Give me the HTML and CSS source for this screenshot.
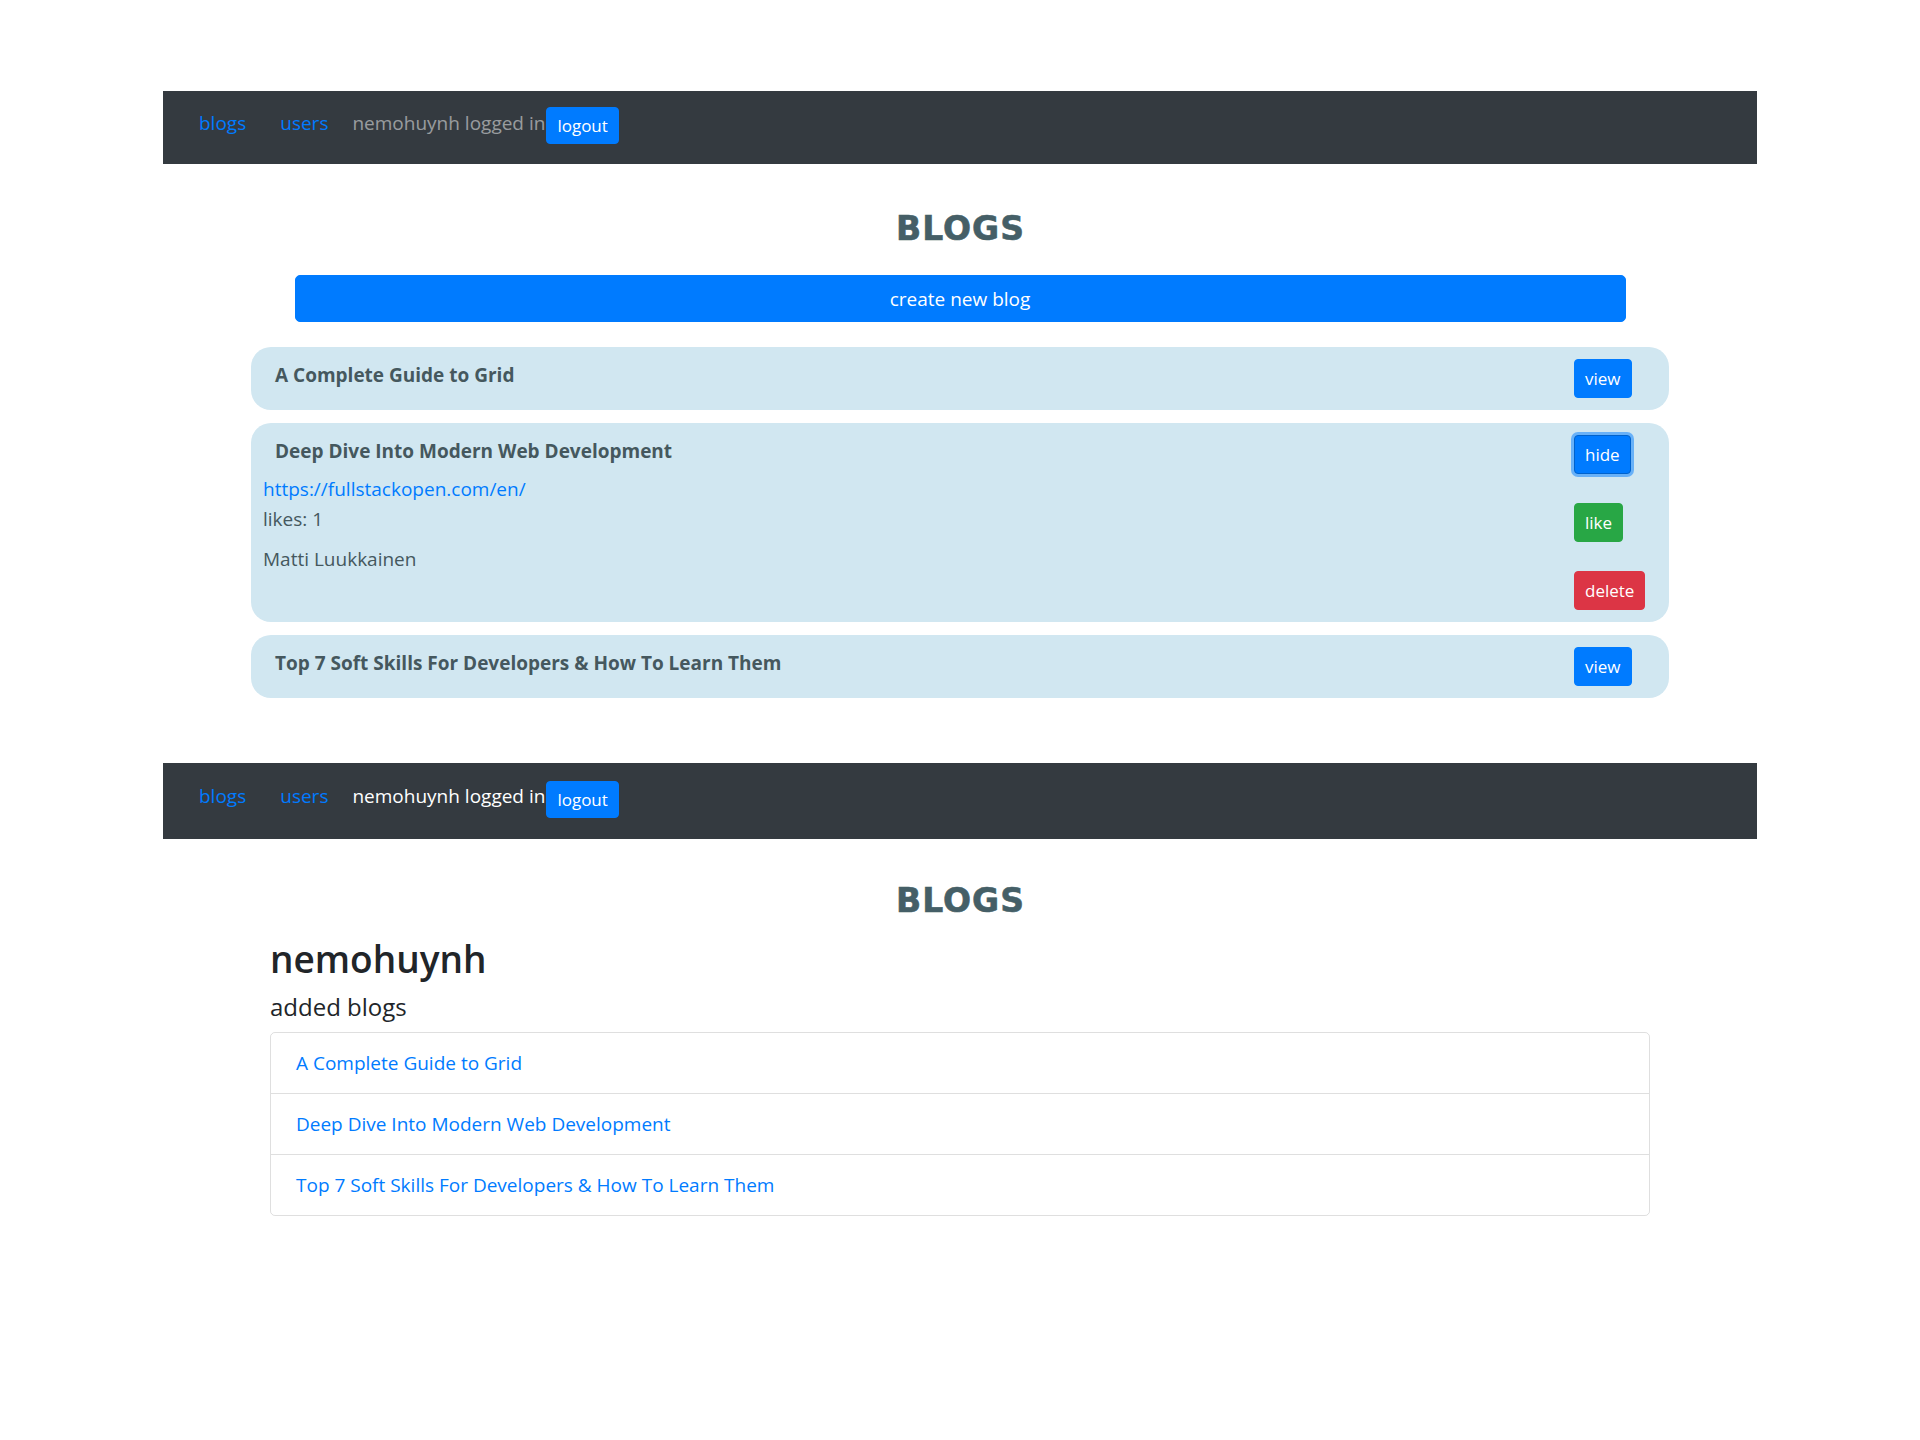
FILE: index.html
```html
<!DOCTYPE html>
<html lang="en">
<head>
<meta charset="utf-8">
<title>Blogs</title>
<link rel="stylesheet" href="styles.css">
</head>
<body>
<div class="page">
  <section class="screen screen--blogs">
    <nav class="navbar">
      <a class="nav-link nav-link--blogs" href="#">blogs</a>
      <a class="nav-link nav-link--users" href="#">users</a>
      <span class="nav-user">nemohuynh logged in</span>
      <button class="btn btn-sm btn-primary btn-logout" type="button">logout</button>
    </nav>
    <h1 class="app-title">BLOGS</h1>
    <div class="blog-area">
      <button class="btn btn-primary btn-create" type="button">create new blog</button>
      <div class="blog-card">
        <div class="blog-main">
          <div class="blog-title">A Complete Guide to Grid</div>
        </div>
        <div class="blog-actions">
          <button class="btn btn-sm btn-primary" type="button">view</button>
        </div>
      </div>
      <div class="blog-card blog-card--open">
        <div class="blog-main">
          <div class="blog-title">Deep Dive Into Modern Web Development</div>
          <a class="blog-url" href="#">https://fullstackopen.com/en/</a>
          <div class="blog-likes">likes: 1</div>
          <div class="blog-author">Matti Luukkainen</div>
        </div>
        <div class="blog-actions">
          <button class="btn btn-sm btn-primary btn-focus" type="button">hide</button>
          <button class="btn btn-sm btn-success" type="button">like</button>
          <button class="btn btn-sm btn-danger" type="button">delete</button>
        </div>
      </div>
      <div class="blog-card">
        <div class="blog-main">
          <div class="blog-title">Top 7 Soft Skills For Developers &amp; How To Learn Them</div>
        </div>
        <div class="blog-actions">
          <button class="btn btn-sm btn-primary" type="button">view</button>
        </div>
      </div>
    </div>
  </section>

  <section class="screen screen--user">
    <nav class="navbar navbar--tall">
      <a class="nav-link nav-link--blogs" href="#">blogs</a>
      <a class="nav-link nav-link--users" href="#">users</a>
      <span class="nav-user nav-user--active">nemohuynh logged in</span>
      <button class="btn btn-sm btn-primary btn-logout" type="button">logout</button>
    </nav>
    <h1 class="app-title app-title--compact">BLOGS</h1>
    <div class="profile">
      <h2 class="profile-name">nemohuynh</h2>
      <h3 class="profile-sub">added blogs</h3>
      <ul class="list-group">
        <li class="list-item"><a href="#">A Complete Guide to Grid</a></li>
        <li class="list-item"><a href="#">Deep Dive Into Modern Web Development</a></li>
        <li class="list-item"><a href="#">Top 7 Soft Skills For Developers &amp; How To Learn Them</a></li>
      </ul>
    </div>
  </section>
</div>
</body>
</html>
```
FILE: styles.css
```css
html, body {
  margin: 0;
  padding: 0;
  background: #ffffff;
}

body {
  font-family: "Open Sans", "Noto Sans", sans-serif;
  font-size: 19px;
  line-height: 30px;
  color: #212529;
}

.page {
  padding-bottom: 40px;
}

.screen {
  width: 1594px;
  margin: 0 auto;
}

.screen--blogs {
  padding-top: 91px;
}

.screen--user {
  margin-top: 65px;
}

/* navbar */
.navbar {
  display: flex;
  align-items: center;
  box-sizing: border-box;
  height: 73px;
  padding: 0 0 4px 36px;
  background: #343a40;
}

.navbar--tall {
  height: 76px;
}

.nav-link {
  color: #007bff;
  text-decoration: none;
  margin-bottom: 6px;
}

.nav-link--blogs {
  margin-right: 34px;
}

.nav-link--users {
  margin-right: 24px;
}

.nav-user {
  color: rgba(255, 255, 255, 0.5);
  margin-bottom: 6px;
  margin-right: 1px;
}

.nav-user--active {
  color: #ffffff;
}

/* buttons */
.btn {
  display: inline-block;
  font-family: inherit;
  font-weight: 400;
  text-align: center;
  border: 1px solid transparent;
  cursor: pointer;
  color: #ffffff;
}

.btn-sm {
  font-size: 17px;
  line-height: 27px;
  padding: 5px 10px;
  border-radius: 4px;
}

.btn-primary {
  background: #007bff;
  border-color: #007bff;
}

.btn-success {
  background: #28a745;
  border-color: #28a745;
}

.btn-danger {
  background: #dc3545;
  border-color: #dc3545;
}

.btn-focus {
  border-color: #0062cc;
  box-shadow: 0 0 0 3px rgba(0, 123, 255, 0.5);
}

.btn-logout {
  line-height: 25px;
  padding: 5px 10px;
}

/* heading */
.app-title {
  margin: 45px 0 0;
  text-align: center;
  font-family: "DejaVu Sans", "Open Sans", sans-serif;
  font-size: 33px;
  line-height: 40px;
  font-weight: 700;
  letter-spacing: 1px;
  padding-left: 1px;
  color: #455f67;
  -webkit-text-stroke: 0.6px #455f67;
}

.app-title--compact {
  margin-top: 42px;
}

/* blog list */
.blog-area {
  width: 1418px;
  margin: 26px auto 0;
  display: flex;
  flex-direction: column;
  gap: 13px;
}

.btn-create {
  align-self: center;
  width: 1331px;
  font-size: 19px;
  line-height: 30px;
  padding: 7.5px 12px;
  border-radius: 5px;
  margin-bottom: 12px;
}

.blog-card {
  display: flex;
  background: #d1e7f1;
  border-radius: 20px;
  padding: 12px 24px 12px 12px;
  color: #45585e;
}

.blog-main {
  flex: 1;
  min-width: 0;
}

.blog-title {
  font-weight: 700;
  padding-left: 12px;
  margin-top: 1px;
}

.blog-card--open .blog-title {
  margin-bottom: 8px;
}

.blog-url {
  display: block;
  color: #007bff;
  text-decoration: none;
}

.blog-author {
  margin-top: 10px;
}

.blog-actions {
  width: 71px;
  display: flex;
  flex-direction: column;
  align-items: flex-start;
  gap: 29px;
}

/* user page */
.profile {
  width: 1380px;
  margin: 16px auto 0;
}

.profile-name {
  margin: 0;
  font-size: 37px;
  line-height: 44px;
  font-weight: 600;
  color: #212529;
}

.profile-sub {
  margin: 11px 0 11px;
  font-size: 24px;
  line-height: 29px;
  font-weight: 400;
  color: #212529;
}

.list-group {
  list-style: none;
  margin: 0;
  padding: 0;
  border: 1px solid rgba(0, 0, 0, 0.125);
  border-radius: 5px;
}

.list-item {
  padding: 15px 25px;
}

.list-item + .list-item {
  border-top: 1px solid rgba(0, 0, 0, 0.125);
}

.list-item a {
  color: #007bff;
  text-decoration: none;
}
```
